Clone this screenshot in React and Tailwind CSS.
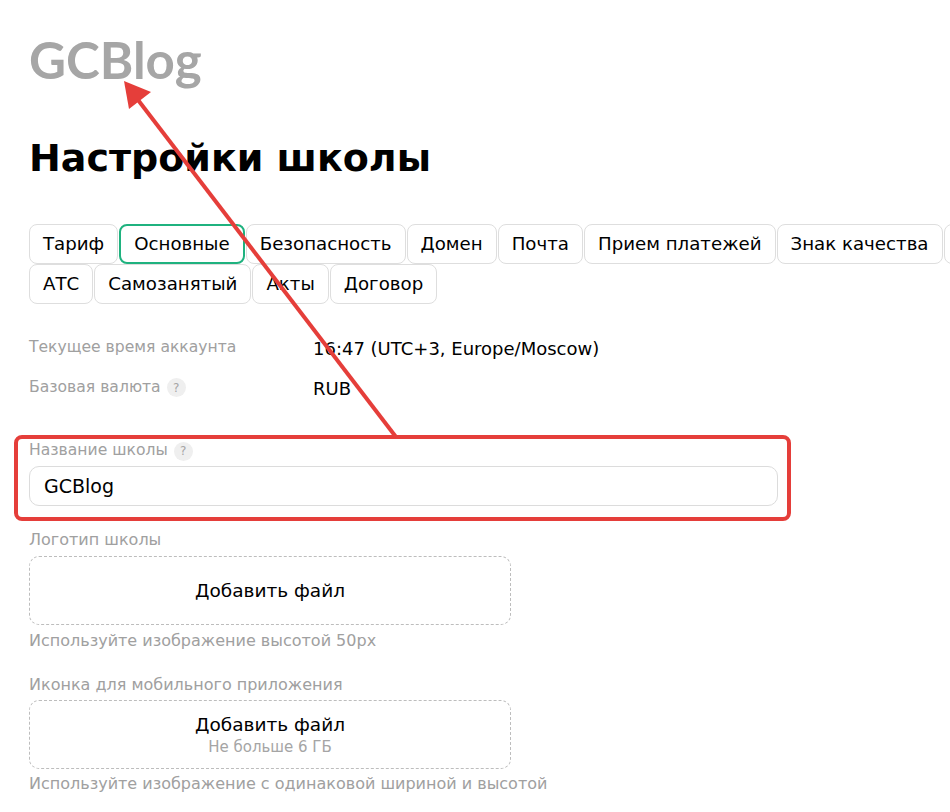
import React from "react";

const tabsRow1 = [
  "Тариф",
  "Основные",
  "Безопасность",
  "Домен",
  "Почта",
  "Прием платежей",
  "Знак качества",
  "",
];
const tabsRow2 = ["АТС", "Самозанятый", "Акты", "Договор"];

const font = { fontFamily: '"DejaVu Sans", "Noto Sans", sans-serif' };

const Tab = ({ label, active }) => (
  <div
    className={`h-10 px-[13px] flex items-center rounded-lg text-[18.2px] text-black bg-white whitespace-nowrap ${
      active ? "border-2 border-[#1fb27f]" : "border border-[#dedede]"
    } ${label ? "" : "w-[60px]"}`}
  >
    {label}
  </div>
);

const Hint = () => (
  <span className="inline-flex items-center justify-center w-[19px] h-[19px] rounded-full bg-[#efefef] text-[12px] text-[#a5a5a5] ml-1.5">
    ?
  </span>
);

const Dropzone = ({ sub }) => (
  <div className="w-[482px] h-[69px] rounded-[10px] border border-dashed border-[#bdbdbd] flex flex-col items-center justify-center">
    <span className="text-[18.5px] text-black leading-6">Добавить файл</span>
    {sub && <span className="text-[15px] text-[#a5a5a5] leading-5">{sub}</span>}
  </div>
);

export default function App() {
  return (
    <div className="relative w-[950px] h-[812px] overflow-hidden bg-white" style={font}>
      <div className="pl-[29px] pt-[28px]">
        <div
          className="text-[51px] font-bold text-[#a6a6a6] leading-[64px]"
          style={{ fontFamily: "Lato, sans-serif" }}
        >
          GCBlog
        </div>
        <h1 className="mt-[38px] text-[38px] font-bold text-black leading-[56px]">
          Настройки школы
        </h1>

        <div className="mt-[38px] w-[1010px] flex flex-col">
          <div className="flex gap-px">
            {tabsRow1.map((t, i) => (
              <Tab key={i} label={t} active={t === "Основные"} />
            ))}
          </div>
          <div className="flex gap-px">
            {tabsRow2.map((t) => (
              <Tab key={t} label={t} />
            ))}
          </div>
        </div>

        <div className="mt-[32px] flex flex-col gap-[16px]">
          <div className="flex items-center h-6">
            <span className="w-[284px] text-[15.6px] text-[#a0a0a0]">
              Текущее время аккаунта
            </span>
            <span className="text-[18px] text-black">16:47 (UTC+3, Europe/Moscow)</span>
          </div>
          <div className="flex items-center h-6">
            <span className="w-[284px] text-[15.6px] text-[#a0a0a0] flex items-center">
              Базовая валюта <Hint />
            </span>
            <span className="text-[18px] text-black">RUB</span>
          </div>
        </div>

        <div className="mt-[39px]">
          <div className="flex items-center text-[15.6px] text-[#a0a0a0] h-6">
            Название школы <Hint />
          </div>
          <div className="mt-[3px] w-[749px] h-[40px] rounded-[10px] border border-[#dcdcdc] flex items-center px-[14px] text-[19px] text-black">
            GCBlog
          </div>
        </div>

        <div className="mt-[22px]">
          <div className="text-[16px] text-[#a0a0a0] h-6 flex items-center">Логотип школы</div>
          <div className="mt-[4px]">
            <Dropzone />
          </div>
          <div className="mt-[4px] text-[16px] text-[#a0a0a0] h-6 flex items-center">
            Используйте изображение высотой 50px
          </div>
        </div>

        <div className="mt-[20px]">
          <div className="text-[16px] text-[#a0a0a0] h-6 flex items-center">
            Иконка для мобильного приложения
          </div>
          <div className="mt-[3px]">
            <Dropzone sub="Не больше 6 ГБ" />
          </div>
          <div className="mt-[3px] text-[16px] text-[#a0a0a0] h-6 flex items-center">
            Используйте изображение с одинаковой шириной и высотой
          </div>
        </div>
      </div>

      {/* annotation overlay */}
      <div className="absolute left-[14px] top-[435px] w-[777px] h-[86px] rounded-lg border-4 border-[#e53e3a] pointer-events-none" />
      <svg className="absolute inset-0 pointer-events-none" width="950" height="812">
        <line x1="396" y1="437" x2="135" y2="96" stroke="#e53e3a" strokeWidth="4" />
        <polygon points="124,81 151,92 129,109" fill="#e53e3a" />
      </svg>
    </div>
  );
}
